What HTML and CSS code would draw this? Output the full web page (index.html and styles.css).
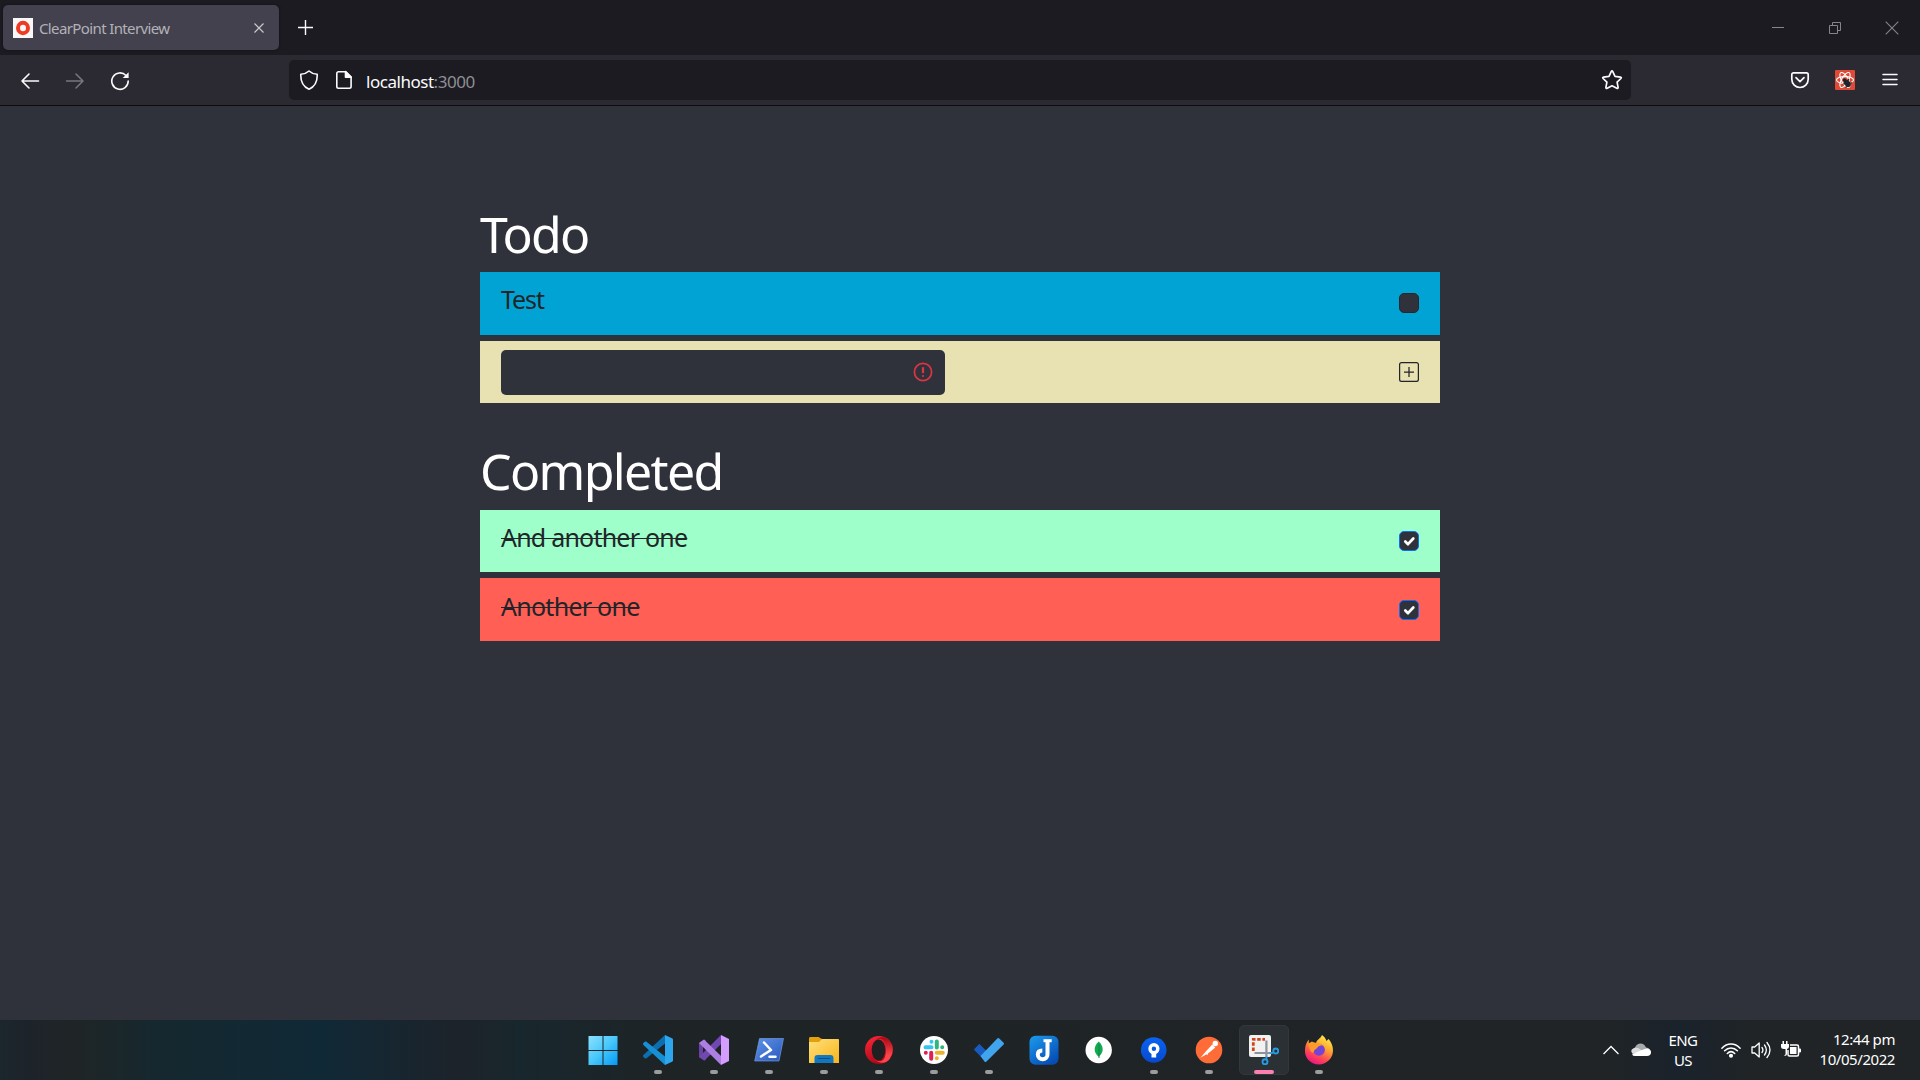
FILE: index.html
```html
<!DOCTYPE html>
<html lang="en">
<head>
<meta charset="utf-8">
<title>ClearPoint Interview</title>
<link rel="stylesheet" href="styles.css">
</head>
<body>
<header class="tabbar">
  <div class="tab">
    <svg class="favicon" width="20" height="20" viewBox="0 0 20 20"><path fill="#f8f8f8" d="M0 0h20v20H0z"/><ellipse cx="10" cy="10" rx="5" ry="5.2" fill="none" stroke="#ee3b24" stroke-width="4"/></svg>
    <span class="tab-title">ClearPoint Interview</span>
    <svg width="10" height="10" viewBox="0 0 10 10" stroke="#c9c8ce" stroke-width="1.2"><path d="M.5.5l9 9M9.500.5l-9 9"/></svg>
  </div>
  <svg class="new-tab" width="15" height="15" viewBox="0 0 15 15" stroke="#fbfbfe" stroke-width="1.4"><path d="M7.500 0v15M0 7.500h15"/></svg>
  <div class="window-controls">
    <svg width="14" height="14" viewBox="0 0 14 14" stroke="#85848a"><path d="M1 6.500h12"/></svg>
    <svg width="14" height="14" viewBox="0 0 14 14" fill="none" stroke="#85848a"><path d="M1.500 4.500h8v8h-8zM4.500 4.500v-3h8v8h-3"/></svg>
    <svg width="14" height="14" viewBox="0 0 14 14" stroke="#85848a" stroke-width="1.1"><path d="M.7.700l12.600 12.600M13.300.7L.7 13.300"/></svg>
  </div>
</header>
<nav class="toolbar">
  <div class="nav-buttons">
    <svg width="20" height="20" viewBox="0 0 20 20" fill="none" stroke="#fbfbfe" stroke-width="1.6" stroke-linecap="round" stroke-linejoin="round"><path d="M18.500 10H2M9 3L2 10l7 7"/></svg>
    <svg width="20" height="20" viewBox="0 0 20 20" fill="none" stroke="#78777e" stroke-width="1.500" stroke-linecap="round" stroke-linejoin="round"><path d="M1.500 10H18M11 3l7 7-7 7"/></svg>
    <svg width="20" height="20" viewBox="0 0 20 20" fill="none" stroke="#fbfbfe" stroke-width="1.6" stroke-linecap="round"><path d="M16 4.500A8.200 8.200 0 1 0 18.200 10"/><path d="M18.600 1.200v5.900h-5.900z" fill="#fbfbfe" stroke="none"/></svg>
  </div>
  <div class="urlbar">
    <svg width="20" height="20" viewBox="0 0 20 20" fill="none" stroke="#fbfbfe" stroke-width="1.600" stroke-linejoin="round"><path d="M10 1c2.400 2.300 5 3 8.200 3.300C18.500 11 16.200 16.500 10 19.200 3.800 16.500 1.500 11 1.800 4.300 5 4 7.600 3.300 10 1z"/></svg>
    <svg class="page-icon" width="20" height="20" viewBox="0 0 20 20" fill="none" stroke="#fbfbfe" stroke-width="1.600" stroke-linejoin="round"><path d="M4.500 1.800h7.300l5.300 5.300v9.400a1.700 1.700 0 0 1-1.700 1.700H4.500a1.700 1.700 0 0 1-1.700-1.700v-13a1.700 1.700 0 0 1 1.700-1.700z"/><path d="M11.500 1.500v5.800h5.800z" fill="#fbfbfe"/></svg>
    <span class="url"><span class="host">localhost</span><span class="port">:3000</span></span>
    <svg width="22" height="22" viewBox="0 0 22 22" fill="none" stroke="#fbfbfe" stroke-width="1.700" stroke-linejoin="round"><path d="M10.200 2.700q.8-1.500 1.600 0l2.200 4.700 5.400.7q1.500.3.500 1.400l-3.800 3.700 1 5.200q.1 1.600-1.300.9L11 16.800l-4.800 2.500q-1.400.7-1.300-.9l1-5.200L2.100 9.500q-1-1.100.5-1.400L8 7.400z"/></svg>
  </div>
  <div class="extensions">
    <svg width="20" height="20" viewBox="0 0 20 20" fill="none" stroke="#fbfbfe" stroke-width="1.700" stroke-linecap="round" stroke-linejoin="round"><path d="M3.500 2.800h13a1.700 1.700 0 0 1 1.700 1.700v4.800a8.200 8.200 0 0 1-16.400 0V4.500a1.700 1.700 0 0 1 1.700-1.700z"/><path d="M6 7.700l4 3.900 4-3.900"/></svg>
    <svg width="20" height="20" viewBox="0 0 20 20" fill="none"><rect width="20" height="20" rx="1" fill="#de4a37"/><g stroke="#fff" stroke-width="1.100"><ellipse cx="10" cy="10" rx="8.500" ry="3.400"/><ellipse cx="10" cy="10" rx="8.500" ry="3.400" transform="rotate(60 10 10)"/><ellipse cx="10" cy="10" rx="8.500" ry="3.400" transform="rotate(120 10 10)"/></g><g transform="rotate(-40 12 13)"><ellipse cx="12" cy="13.500" rx="2.900" ry="4" fill="#20242a"/><circle cx="12" cy="9" r="1.700" fill="#20242a"/><path d="M8 11l8 5M16 11l-8 5" stroke="#20242a"/></g></svg>
    <svg width="20" height="20" viewBox="0 0 20 20" stroke="#fbfbfe" stroke-width="1.500" stroke-linecap="round"><path d="M3 4.500h14M3 9.500h14M3 14.500h14"/></svg>
  </div>
</nav>
<main class="page">
  <section class="list">
    <h1 class="heading heading-todo">Todo</h1>
    <div class="item item-blue"><span class="label label-test">Test</span><span class="box"></span></div>
    <div class="item item-sand">
      <div class="entry"><svg width="20" height="20" viewBox="0 0 20 20" fill="none" stroke="#dc3545" stroke-width="1.700"><circle cx="10" cy="10" r="8.600"/><path d="M10 5.200v5.900" stroke-width="2.200"/><circle cx="10" cy="14" r="1.100" fill="#dc3545" stroke="none"/></svg></div>
      <svg width="20" height="20" viewBox="0 0 20 20" fill="none" stroke="#212529" stroke-width="1.250"><rect x=".6" y=".6" width="18.800" height="18.800" rx="2"/><path d="M10 5v10M5 10h10"/></svg>
    </div>
  </section>
  <section class="list">
    <h1 class="heading heading-done">Completed</h1>
    <div class="item item-green"><span class="label label-and struck">And another one</span><span class="box checked"><svg width="18" height="18" viewBox="0 0 18 18" fill="none" stroke="#fff" stroke-width="2.700" stroke-linecap="round" stroke-linejoin="round"><path d="M5.300 9.500l2.700 2.700 5.300-5.700"/></svg></span></div>
    <div class="item item-red"><span class="label label-another struck">Another one</span><span class="box checked"><svg width="18" height="18" viewBox="0 0 18 18" fill="none" stroke="#fff" stroke-width="2.700" stroke-linecap="round" stroke-linejoin="round"><path d="M5.300 9.500l2.700 2.700 5.300-5.700"/></svg></span></div>
  </section>
</main>
<footer class="taskbar">
  <div class="apps">
    <div class="app"><svg width="30" height="30" viewBox="0 0 30 30"><defs><linearGradient id="win" gradientUnits="userSpaceOnUse" x1="1" y1="1" x2="29" y2="29"><stop stop-color="#8be1fd"/><stop offset=".5" stop-color="#48c8fb"/><stop offset="1" stop-color="#089bf4"/></linearGradient></defs><path fill="url(#win)" d="M.5 1h14v14h-14zM15.500 1h14v14h-14zM.5 16h14v14h-14zM15.500 16h14v14h-14z"/></svg></div>
    <div class="app app-code running"><svg width="30" height="30" viewBox="0 0 30 30"><path fill="#0b6fb0" d="M22 0v8.500L3.500 23.200c-.6.500-1.300.4-1.800 0L.4 22c-.6-.6-.5-1.400 0-1.900z"/><path fill="#168fd3" d="M22 30v-8.500L3.500 6.800c-.6-.5-1.300-.4-1.800 0L.4 8c-.6.600-.5 1.400 0 1.900z"/><path fill="#2ca7ee" d="M22 0l7 3.300c.6.300 1 .8 1 1.500v20.400c0 .7-.4 1.200-1 1.500L22 30z"/></svg></div>
    <div class="app running"><svg width="30" height="30" viewBox="0 0 30 30"><path fill="#6a42a5" d="M0 8l5-3.500 2 1L4 9v12l3 3.500-2 1L0 22z"/><path fill="#7147b1" d="M22 0v9L5.500 25.500 0 22l1-1z"/><path fill="#ae7fe2" d="M5 4.500L22 21v9L0 8z"/><path fill="#d59dff" d="M22 0l8 4v22l-8 4z"/></svg></div>
    <div class="app running"><svg width="30" height="30" viewBox="0 0 30 30"><defs><linearGradient id="ps" x1="0" y1="0" x2="1" y2="1"><stop stop-color="#5f94e8"/><stop offset="1" stop-color="#2857bd"/></linearGradient></defs><path fill="url(#ps)" stroke="#7da6eb" stroke-width=".6" d="M5.500 3.500h24L25 26H.7z"/><path fill="none" stroke="#fff" stroke-width="2.500" stroke-linecap="round" stroke-linejoin="round" d="M10 7.500l7 7.500-10 6.500M15.500 21.800h6"/></svg></div>
    <div class="app running"><svg width="30" height="30" viewBox="0 0 30 30"><defs><linearGradient id="folder" x1="0" y1="0" x2="1" y2="1"><stop stop-color="#ffe07a"/><stop offset="1" stop-color="#f8b51b"/></linearGradient></defs><path fill="#e2a10c" d="M0 10V3.500C0 2.500.7 2 1.500 2h8L13 4h16c.7 0 1 .5 1 1v5z"/><path fill="url(#folder)" d="M0 7h10l3-3h15.500c1 0 1.500.6 1.500 1.500V28H0z"/><path fill="#1178c0" d="M5.500 28v-5a3 3 0 0 1 3-3h13a3 3 0 0 1 3 3v5z"/><path stroke="#0b4c87" stroke-linecap="round" d="M9.500 23.500h11"/></svg></div>
    <div class="app running"><svg width="30" height="30" viewBox="0 0 30 30"><defs><linearGradient id="opera" x1="0" y1="0" x2=".4" y2="1"><stop stop-color="#ff2838"/><stop offset="1" stop-color="#ab0718"/></linearGradient><linearGradient id="opera2" x1="0" y1="0" x2="0" y2="1"><stop stop-color="#a50715"/><stop offset=".7" stop-color="#fb454b"/></linearGradient></defs><circle cx="15" cy="15" r="14" fill="url(#opera)"/><path fill="url(#opera2)" d="M10 6.500a8 8 0 0 1 6-2.700c4 0 6 5 6 11.200s-2 11.200-6 11.200a8 8 0 0 1-6-2.700c5 6 13 5.500 16-.2a14 14 0 0 0 0-16.600c-3-5.700-11-6.200-16-.2z"/><ellipse cx="14.500" cy="15" rx="6.800" ry="10.500" fill="#201f22"/></svg></div>
    <div class="app running"><svg width="30" height="30" viewBox="0 0 30 30" fill="none" stroke-linecap="round" stroke-width="4"><circle cx="15" cy="15" r="14" fill="#fff"/><path stroke="#36c5f0" d="M6.500 12.200h6M12.500 6.800v0"/><path stroke="#2eb67d" d="M17.800 6.500v6M23.200 12.200v0"/><path stroke="#ecb22e" d="M17.800 17.800h6M17.800 23.200v0"/><path stroke="#e01e5a" d="M12.200 17.800v6M6.800 17.800v0"/></svg></div>
    <div class="app running"><svg width="30" height="30" viewBox="0 0 30 30"><path fill="#185abd" d="M5.500 9L16 19.500 11 26 .5 15.200q-.7-.7 0-1.400L5 9.200z"/><path fill="#41a5ee" d="M6.500 21L23.300 3.400q1-.8 2 0l4.300 4.400q.8.800 0 1.600L12.500 26.500q-1 1-2 0z"/></svg></div>
    <div class="app"><svg width="30" height="30" viewBox="0 0 30 30"><defs><linearGradient id="jop" x1="0" y1="0" x2=".7" y2="1"><stop stop-color="#1c9bee"/><stop offset="1" stop-color="#064db5"/></linearGradient></defs><rect x=".5" y=".8" width="29" height="29" rx="6" fill="url(#jop)"/><path fill="none" stroke="#fff" stroke-width="4" d="M18.500 5v14.500c0 6.500-9.700 6-9.700 0 0-2.500 1.700-4 4.500-4"/><path stroke="#fff" stroke-width="3" d="M14.500 5.700h8.200"/></svg></div>
    <div class="app"><svg width="30" height="30" viewBox="0 0 30 30"><circle cx="14.700" cy="15" r="13.200" fill="#fff"/><path fill="#13aa52" d="M14.700 6.500c6 5.500 4.700 11.500 0 15.200-4.700-3.700-6-9.700 0-15.200z"/><path stroke="#11834a" d="M15 9v14"/></svg></div>
    <div class="app running"><svg width="30" height="30" viewBox="0 0 30 30"><defs><linearGradient id="src" x1="0" y1="0" x2="0" y2="1"><stop stop-color="#0a63f0"/><stop offset="1" stop-color="#0649cf"/></linearGradient></defs><circle cx="14.700" cy="15" r="12.800" fill="url(#src)"/><circle cx="14.900" cy="13.700" r="3.900" fill="none" stroke="#fff" stroke-width="3.400"/><path fill="#fff" d="M12.500 16.500h4.700v6h-4.700z"/></svg></div>
    <div class="app running"><svg width="30" height="30" viewBox="0 0 30 30"><circle cx="15" cy="15" r="13.300" fill="#ff6c37"/><circle cx="21.300" cy="8.500" r="2.700" fill="#fff"/><path fill="#fff" d="M18.300 9.500l3 3-6.300 5.300-8.500 4.900 1-1.200 4.500-5.300z"/><path stroke="#fff" d="M14 17l-1 3"/></svg></div>
    <div class="app running active"><svg width="30" height="30" viewBox="0 0 30 30" fill="none"><rect x="0" y="0" width="22" height="22" rx="2" fill="#f1f1f2"/><path stroke="#cf4319" stroke-width="2.800" stroke-dasharray="3.500 1.700" d="M4.300 16V4.300H16"/><path stroke="#8b949d" stroke-width="2.200" d="M17.400 5.500v17M5.500 18h18"/><circle cx="26.800" cy="16" r="2.500" stroke="#249be3" stroke-width="1.900"/><circle cx="16" cy="26.800" r="2.500" stroke="#249be3" stroke-width="1.900"/><path stroke="#249be3" stroke-width="1.500" d="M17.500 24.500v-3M24.500 17.500l-4 1"/></svg></div>
    <div class="app running"><svg width="30" height="30" viewBox="0 0 30 30"><defs><linearGradient id="fox" x1=".8" y1="0" x2=".3" y2="1"><stop stop-color="#fff44f"/><stop offset=".4" stop-color="#ffa52e"/><stop offset=".72" stop-color="#ff4656"/><stop offset="1" stop-color="#eb1286"/></linearGradient></defs><path fill="url(#fox)" d="M18 0c2 1.500 3.800 3.400 4.500 6l2-2c3 3.500 5 8 4.400 13A14.200 14.200 0 0 1 15 29.500C6 29.500.3 22.500 1 14.500 1.200 9.700 2.800 7 4.800 4.500v3.700L8 6.500c1 1 2.500 1.300 4.200 1.300C12.500 4.500 16.500 4 18 0z"/><circle cx="15" cy="14.800" r="5.900" fill="#7543d5"/><path fill="#ff9b2a" d="M4.500 9c3-2 6-1.800 8-.5 2-.5 4.500.2 6 2-1.800-.1-4 .2-5 2-1 1.500-3 2-3.500 3.500-1 5-5.200-2-5.500-7z"/></svg></div>
  </div>
  <div class="tray">
    <svg class="chevron" width="18" height="18" viewBox="0 0 18 18" fill="none" stroke="#fff" stroke-width="1.250"><path d="M1.500 13L9 5.500l7.500 7.500"/></svg>
    <svg class="cloud" width="20" height="14" viewBox="0 0 20 14"><path fill="#a8aaac" d="M1 8a5 5 0 0 1 3-3.500C6-.5 13-1 15 4.500c3 .3 5 2.500 5 5H1z"/><path fill="#dadcde" d="M3 5.200c2-.8 4-.4 6 1l5.500 3L2 11C-1 8 .5 6 3 5.200z"/><path fill="#fff" d="M1 11.500L11 7l4.500-1.500c3 0 4.500 2 4.500 4S18.500 13 16 13H4q-2 0-3-1.500z"/></svg>
    <div class="lang"><span>ENG</span><span>US</span></div>
    <svg class="wifi" width="20" height="20" viewBox="0 0 20 20" fill="none" stroke="#fff" stroke-width="1.500" stroke-linecap="round"><path d="M.9 8.200c5.200-5.600 13-5.600 18.200 0M3.600 10.800c3.700-3.800 9.100-3.800 12.800 0M6.300 13.500c2.200-2.200 5.200-2.200 7.400 0"/><circle cx="10" cy="15.800" r="1.300" fill="#fff"/></svg>
    <svg class="speaker" width="20" height="20" viewBox="0 0 20 20" fill="none" stroke="#fff" stroke-width="1.300" stroke-linecap="round" stroke-linejoin="round"><path d="M1 7h2.700l4.500-4v14l-4.500-4H1zM11 7.500q1.800 2.500 0 5M13.500 5q3.700 5 0 10M16 2.500q6 7.500 0 15"/></svg>
    <svg class="battery" width="20" height="20" viewBox="0 0 20 20"><path fill="none" stroke="#fff" stroke-width="1.500" d="M9 5h7a1.500 1.500 0 0 1 1.500 1.500v8A1.500 1.500 0 0 1 16 16H8.500A1.500 1.500 0 0 1 7 14.500V10"/><path fill="#fff" d="M9 7h6.500v7H9zM18 8.500h1q1 0 1 1v2q0 1-1 1h-1zM1.500 1H3v3h2V1h1.500v3H8v2.500q0 2-2 2.500v5q0 2-2.500 2V15q1 0 1-1V9H3Q0 9 0 6.500V4h1.500z"/></svg>
    <div class="clock"><span class="time">12:44 pm</span><span class="date">10/05/2022</span></div>
  </div>
</footer>
</body>
</html>
```
FILE: styles.css
```css
* { box-sizing: border-box; }
body {
  margin: 0;
  width: 1920px;
  height: 1080px;
  overflow: hidden;
  display: flex;
  flex-direction: column;
  background: #30323b;
  font-family: "Noto Sans", "Open Sans", sans-serif;
}
svg { display: block; flex: none; }
span { white-space: nowrap; }

.tabbar {
  height: 55px;
  flex: none;
  display: flex;
  align-items: center;
  padding-left: 3px;
  background: #1c1b22;
}
.tab {
  width: 276px;
  height: 45px;
  display: flex;
  align-items: center;
  padding: 0 15px 0 10px;
  gap: 6px;
  border-radius: 5px;
  background: #42414d;
  box-shadow: 0 0 3px rgba(0, 0, 0, .5);
}
.favicon { margin-top: 1px; }
.tab-title {
  flex: 1;
  font-size: 15px;
  letter-spacing: -.62px;
  line-height: 20px;
  color: #b3b2b9;
}
.new-tab { margin-left: 19px; }
.window-controls {
  margin-left: auto;
  padding-right: 21px;
  display: flex;
  gap: 43px;
}

.toolbar {
  height: 51px;
  flex: none;
  display: flex;
  align-items: center;
  background: #2b2a33;
  border-bottom: 1px solid #0c0c0d;
}
.nav-buttons { display: flex; gap: 25px; padding: 2px 0 0 20px; width: 289px; }
.urlbar {
  width: 1342px;
  height: 40px;
  display: flex;
  align-items: center;
  padding: 0 8px 0 10px;
  border-radius: 5px;
  background: #1c1b22;
}
.page-icon { margin-left: 15px; }
.url {
  flex: 1;
  margin-left: 12px;
  padding-top: 3px;
  font-size: 17px;
  letter-spacing: -.47px;
  line-height: 22px;
}
.host { color: #fbfbfe; }
.port { color: #8f8e94; }
.extensions { margin-left: auto; padding-right: 20px; display: flex; gap: 25px; }

.page {
  flex: 1;
  width: 960px;
  margin: 0 auto;
  padding-top: 94px;
  display: flex;
  flex-direction: column;
  gap: 35px;
}
.list { display: flex; flex-direction: column; gap: 6px; }
.heading {
  margin: 0;
  height: 66px;
  line-height: 66px;
  font-size: 50px;
  font-weight: 400;
  color: #fff;
}
.heading-todo { letter-spacing: -1.8px; line-height: 68px; }
.heading-done { letter-spacing: -1.65px; }
.item {
  height: 62px;
  display: flex;
  align-items: center;
  justify-content: space-between;
  padding: 0 21px;
}
.item-blue { height: 63px; padding-bottom: 1px; background: #00a3d3; }
.item-sand { background: #e8e2b2; }
.item-green { background: #9effca; }
.item-red { height: 63px; background: #ff5f55; }
.label { font-size: 25px; line-height: 30px; color: #212529; padding-bottom: 8px; }
.label-test { letter-spacing: -1.1px; }
.label-and { letter-spacing: -.78px; }
.label-another { letter-spacing: -.73px; }
.struck { text-decoration: line-through; text-decoration-thickness: 1px; }
.entry {
  width: 444px;
  height: 45px;
  display: flex;
  align-items: center;
  justify-content: flex-end;
  padding-right: 12px;
  border-radius: 5px;
  background: #30323b;
}
.box {
  width: 20px;
  height: 20px;
  border: 1px solid #25272e;
  border-radius: 5px;
  background: #30323b;
}
.checked { border-color: #0d6efd; }

.taskbar {
  height: 60px;
  flex: none;
  display: flex;
  justify-content: space-between;
  padding-left: 575px;
  background: linear-gradient(90deg, #1b272c 0, #1d232a 25px, #1f2526 75px, #15282f 160px, #102936 320px, #1d232a 460px, #18272d 520px, #1e2325 680px, #202426 1600px, #1a222b 1680px, #202426 1760px);
}
.apps { display: flex; }
.app {
  position: relative;
  width: 55px;
  height: 60px;
  display: flex;
  align-items: center;
  justify-content: center;
}
.app-code { margin-right: 1px; }
.running::after {
  content: "";
  position: absolute;
  left: 24px;
  top: 50px;
  width: 8px;
  height: 4px;
  border-radius: 2px;
  background: #9b9c9e;
}
.active {
  width: 50px;
  height: 50px;
  margin: 5px 2px 0 3px;
  border: 1px solid #31373a;
  border-radius: 5px;
  background: #2a3033;
}
.active::after { left: 14px; top: 44px; width: 20px; background: #fb7fb0; }
.tray { display: flex; align-items: center; padding-right: 25px; color: #fff; font-size: 15px; line-height: 20px; }
.chevron { margin-right: 11px; }
.cloud { margin-right: 18px; }
.lang { width: 28px; display: flex; flex-direction: column; align-items: center; letter-spacing: -.6px; margin-right: 24px; }
.wifi { margin-right: 10px; }
.speaker { margin-right: 10px; }
.clock { width: 94px; padding-bottom: 2px; display: flex; flex-direction: column; align-items: flex-end; letter-spacing: -.43px; }
```
